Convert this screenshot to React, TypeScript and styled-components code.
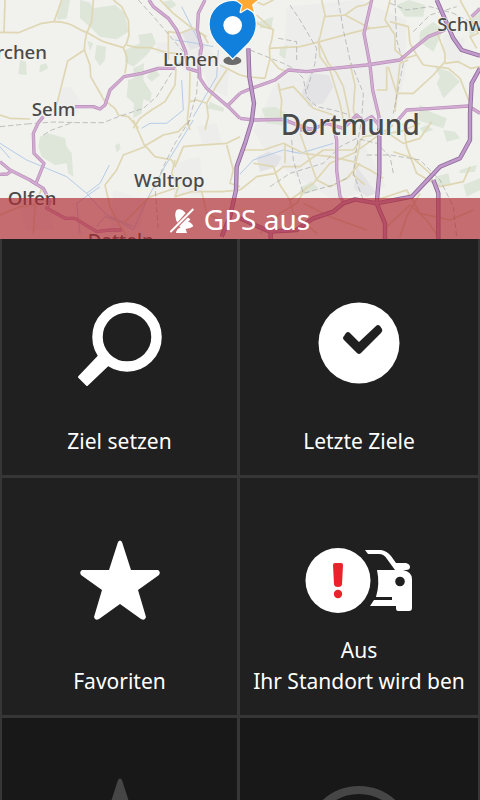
import React from "react";
import styled, { createGlobalStyle } from "styled-components";

const GlobalStyle = createGlobalStyle`
  *, *::before, *::after { box-sizing: border-box; }
  body { margin: 0; background: #363636; }
`;

const Screen = styled.main`
  display: flex;
  flex-direction: column;
  height: 100vh;
  overflow: hidden;
  background: #363636;
  color: #f2f2f2;
  font-family: "Noto Sans", "Open Sans", sans-serif;
`;

const MapPanel = styled.section`
  position: relative;
  flex: none;
  height: 239px;
  overflow: hidden;
  background: #f1f1ed;
`;

const MapDrawing = styled.svg`
  display: block;
  width: 100%;
  height: 100%;
`;

const StatusBanner = styled.div`
  position: absolute;
  left: 0;
  right: 0;
  bottom: 0;
  display: flex;
  align-items: center;
  justify-content: center;
  gap: 8px;
  height: 41px;
  background: rgba(175, 44, 53, 0.68);
  color: #fff;
  font-size: 28px;
  line-height: 40px;
`;

const StatusIcon = styled.svg`
  width: 26px;
  height: 26px;
  margin-top: 4px;
`;

const TileGrid = styled.nav`
  flex: 1;
  min-height: 0;
  display: grid;
  grid-template-columns: 235fr 238fr;
  grid-template-rows: 236px 237px 237px;
  gap: 3px;
  padding: 0 2px;
`;

const Tile = styled.button<{ $dimmed?: boolean }>`
  display: flex;
  flex-direction: column;
  align-items: center;
  justify-content: space-between;
  min-width: 0;
  padding: ${(p) => (p.$dimmed ? "58px" : "60px")} 11px 18px;
  border: 0;
  background: ${(p) => (p.$dimmed ? "#181818" : "#202020")};
  color: ${(p) => (p.$dimmed ? "#464646" : "#fff")};
  font: inherit;
  font-size: 21px;
  line-height: 31px;
`;

const TileIcon = styled.svg<{ $wide?: boolean }>`
  flex: none;
  width: ${(p) => (p.$wide ? "108px" : "84px")};
  height: 84px;
  overflow: visible;
`;

const Caption = styled.span`
  display: block;
  width: 100%;
  overflow: hidden;
  white-space: nowrap;
  text-align: center;
`;

const WOODS = [
  "M185 0L210 0L200 55L172 60L170 40Z",
  "M240 0L270 8L280 25L345 15L375 40L385 95L350 118L300 110L275 85L240 55Z",
  "M290 135L318 140L315 180L300 198L284 175Z",
  "M262 122L280 130L270 152Z",
  "M60 180L78 185L80 225L55 222Z",
  "M120 195L138 190L145 205L118 218Z",
  "M375 150L420 130L415 105L455 98L468 130L440 165L400 200L375 185Z",
  "M400 205L432 190L430 240L455 280L450 305L430 298L425 340L400 355L402 310L380 290L385 240L402 235Z",
  "M462 205L480 225L455 245L440 230Z",
  "M490 5L515 0L530 15L505 30Z",
  "M630 305L672 325L670 335L622 325Z",
  "M780 65L820 50L815 80L780 85Z",
  "M725 75L755 60L780 65L770 80L735 100Z",
  "M840 145L862 135L855 178L838 165Z",
  "M1190 15L1225 0L1275 15L1270 50L1215 50Z",
  "M1260 95L1300 65L1330 90L1300 155L1258 125Z",
  "M1305 200L1350 215L1380 245L1330 295L1310 250L1320 230Z",
  "M1405 60L1440 30L1440 85L1410 110Z",
  "M785 325L825 320L870 345L860 378L800 370Z",
  "M1260 315L1290 335L1340 355L1330 385L1250 360Z",
  "M120 410L145 400L195 415L200 440L215 460L220 530L205 520L200 490L165 495L125 470L115 440Z",
  "M345 435L358 430L362 445L350 458Z",
  "M905 560L935 545L955 565L925 580L895 585Z",
  "M1330 390L1365 395L1380 415L1340 425Z",
  "M1380 510L1430 495L1425 515L1378 520Z",
  "M1305 530L1345 520L1352 555L1310 560Z",
  "M1390 555L1440 535L1440 570L1400 590Z",
  "M1260 385L1280 375L1300 390L1270 400Z",
];

const TOWNS = [
  "M180 265L210 260L240 300L235 340L175 345Z",
  "M510 110L580 80L615 130L650 170L640 220L560 215L500 170Z",
  "M610 210L690 200L680 290L625 260Z",
  "M470 130L505 125L510 165L470 160Z",
  "M860 20L1080 0L1220 60L1215 220L1180 360L1090 430L1160 560L1000 600L810 480L760 390L850 200Z",
  "M520 490L600 470L610 590L520 580Z",
  "M590 380L650 370L665 430L610 435Z",
  "M1330 100L1395 115L1380 195L1330 170Z",
  "M340 570L440 600L420 690L330 680Z",
  "M60 620L150 600L160 690L80 690Z",
];

const INDUSTRY = [
  "M930 220L985 225L1000 260L970 310L925 320L905 280Z",
  "M770 470L805 455L845 470L830 500L780 515Z",
  "M1070 500L1130 580L1100 590L1062 565Z",
  "M545 95L580 80L600 140L570 150Z",
];

const LANES = [
  "M185 0L162 65L125 70L55 98L0 97M15 0L12 95",
  "M162 65C220 65 230 90 262 98L310 125L370 143L380 130L387 105L385 60L365 20L340 0",
  "M280 0L275 65L260 100L255 125L253 150L203 183L180 275L170 315",
  "M253 150L270 195L272 230L295 270L312 300L345 325L355 345L385 350L415 385",
  "M370 143L382 175L375 220",
  "M380 135L410 143L450 143L475 150L500 158L530 160",
  "M0 345L30 355L90 357",
  "M505 180L505 95L540 100L580 85L620 110",
  "M528 205L525 255L495 305L455 330L420 355L400 385",
  "M570 215L568 300L562 360L570 390M570 305L590 300L620 310M680 210L650 255L620 310L625 350L615 390",
  "M480 0L520 40L570 80L610 105L625 130M660 195L720 225",
  "M760 0L790 15L820 0M770 45L820 90L815 120L808 145L810 175L795 235M745 55L790 80L820 88",
  "M795 235L740 230L720 225M810 175L835 205L860 215M808 145L900 140L960 125L1050 100L1110 85L1170 78",
  "M965 0L975 45L960 110L955 125L985 190L1010 220L1030 260L1045 330L1050 365",
  "M955 125L960 170L990 210L1020 310L1030 360M1050 190L1065 255L1060 330L1070 360",
  "M975 50L1035 45L1110 85M1035 45L1070 20L1095 15L1120 0",
  "M1170 0L1155 60L1185 105L1185 150L1215 175L1250 165L1270 195",
  "M1200 190L1190 280L1240 280L1300 225L1335 185L1335 160L1310 95M1200 190L1225 180",
  "M1270 195L1345 205L1380 235L1410 310M1250 165L1230 130L1225 80L1170 65",
  "M1335 190L1375 185L1412 205L1440 200M1380 0L1435 100L1410 110L1430 145",
  "M1165 200L1190 280L1185 335M1130 270L1160 270L1160 200",
  "M835 250L840 270L880 260L940 325L1000 345M835 255L845 300L842 350L860 385",
  "M400 360L435 440L370 465L350 510L315 555L330 620L350 660L380 710",
  "M435 437L490 405L535 395L570 360M435 437L465 470L515 480L525 500L550 440L580 437L680 430L720 410",
  "M525 480L515 520L535 560L525 590L575 575L665 575L720 570M680 435L700 510L690 550L720 560",
  "M605 575L620 640L660 660L670 710M525 565L450 590L420 620L370 670",
  "M0 645L60 620L100 615L125 570M125 565L105 620L100 700",
  "M720 570L770 530L825 520L850 500L900 500L970 450L1060 450L1090 410L1200 395L1260 370",
  "M720 450L790 450L850 430L910 460L990 470L1060 485L1110 510L1150 535",
  "M760 490L820 500L840 555L870 600L940 550L990 490L1060 460L1130 410L1180 375",
  "M855 430L855 490M900 400L925 470L950 540L990 560L1040 535L1080 490M1080 430L1060 525L1095 555",
  "M1210 370L1220 440L1250 520L1320 560L1390 545L1410 500",
  "M1180 455L1240 475L1290 520L1310 580M1150 390L1210 430L1260 415L1295 365",
  "M780 700L840 640L890 610L920 560M870 600L880 640L950 700M910 610L990 650L1100 690",
  "M1130 600L1220 570L1260 640L1350 660L1420 630M1150 690L1230 615L1280 660L1315 710M1260 580L1220 650L1200 710",
];

const TRUNKS = [
  "M447 0L460 20L505 55L530 90L557 155L563 205L595 215",
  "M615 0L595 40L592 90L605 140L597 190L600 235L620 265L690 325L720 355",
  "M525 205L475 205L425 220L372 230L330 270L315 315L300 327L280 320L225 320",
  "M685 315L720 280",
  "M130 350L115 368L100 400L102 460L132 490L108 550",
  "M0 485L30 510L90 540L108 552L130 565L150 605L140 625L195 655L225 655L290 695L330 690L365 690",
  "M0 523L22 522L38 510",
  "M720 280L755 265L825 240L865 210L920 215L1000 205L1100 195L1200 180L1235 150L1285 110L1335 90",
  "M1115 0L1092 100L1110 195L1118 270L1137 350L1137 385",
  "M1415 50L1440 25M720 355L760 360L850 358L880 370L950 395",
  "M1190 365L1220 330L1300 325L1405 318L1440 340",
  "M1000 380L1010 420L1010 510L1020 590L1030 605",
  "M900 390L945 385L980 370L1030 385L1070 345L1090 365L1115 350L1137 375",
];

const MOTORWAYS = [
  "M745 145L748 230L762 310L755 365L735 430L710 500L708 570L690 650L665 710",
  "M1310 0L1360 115L1385 150L1440 167M1440 205L1415 250L1410 340L1410 420L1380 475L1320 500L1235 590L1130 610L1065 598L1030 610L1000 635L940 655L890 690L810 695L720 655",
  "M1138 385L1138 520L1130 610L1155 670L1155 717",
  "M1300 540L1315 580L1315 717M812 695L812 717",
];

const RAILS = [
  "M80 372L160 366L240 368L310 368L355 350L430 325L470 290L520 210L555 170M415 0L465 55L520 120L550 155M600 100L590 280L560 385",
  "M870 15L900 60L950 145L945 190L930 240L920 270M750 150L850 190L880 205L910 235L920 290L950 320L1000 330L1050 345",
  "M1015 0L1030 90L1050 180L1090 280L1085 360L1070 440L1060 520L1090 600",
  "M1185 0L1190 120L1210 190L1180 340M1170 10L1220 30L1290 20L1360 40L1440 80M1240 95L1290 45L1370 20",
  "M810 560L870 520L970 490L1020 440L1070 415L1130 430L1170 470L1180 520M875 420L880 480L910 580L1000 555L1050 530",
  "M1100 465L1170 465L1260 480L1320 540L1360 620L1370 710M835 115L890 125L890 180",
  "M570 360L525 430L490 500L465 560L475 690M0 380L80 372M130 405L155 390L220 367",
];

const WATER = [
  "M0 430L80 480L200 530L260 580L320 645L400 680M260 580L300 550L328 495",
  "M0 440L30 475M720 522L760 480L850 450L900 460L1000 430",
  "M425 385L450 370L500 370L550 330L545 240M580 360L500 490L440 600L400 690M655 150L650 230L580 350",
  "M525 120L590 130L640 140M545 20L600 130M300 560L230 610L240 700M400 690L360 665L315 650L290 680",
];

type PlaceLabel = { text: string; x: number; y: number; size: number; end?: boolean };

const PLACES: PlaceLabel[] = [
  { text: "rchen", x: 141, y: 178, size: 56, end: true },
  { text: "Selm", x: 95, y: 348, size: 56 },
  { text: "Lünen", x: 489, y: 199, size: 56 },
  { text: "Schw", x: 1312, y: 93, size: 56 },
  { text: "Dortmund", x: 842, y: 406, size: 84 },
  { text: "Waltrop", x: 402, y: 560, size: 56 },
  { text: "Olfen", x: 23, y: 614, size: 56 },
  { text: "Datteln", x: 263, y: 740, size: 56 },
];

const STAR =
  "M40 4Q42 1 44 4L53 32L80 32Q83 34 81 37L60 52L68 79Q67 83 63 81L42 66L21 81Q17 83 16 79L24 52L3 37Q1 34 4 32L31 32Z";

function CityMap() {
  return (
    <MapDrawing
      viewBox="0 0 1440 717"
      preserveAspectRatio="xMidYMid slice"
      role="img"
      aria-label="Karte"
      fill="none"
      strokeLinejoin="round"
    >
      <rect width="1440" height="717" fill="#f1f1ed" />
      {TOWNS.map((d) => <path key={d} d={d} fill="#ededeb" />)}
      {INDUSTRY.map((d) => <path key={d} d={d} fill="#e3e3e5" />)}
      {WOODS.map((d) => <path key={d} d={d} fill="#dde6d9" />)}
      {WATER.map((d) => <path key={d} d={d} stroke="#b4cce8" strokeWidth="3" />)}
      {LANES.map((d) => <path key={d} d={d} stroke="#dfd7b3" strokeWidth="5" />)}
      {RAILS.map((d) => (
        <path key={d} d={d} stroke="#a3a5a6" strokeWidth="2" strokeDasharray="16 8" />
      ))}
      {TRUNKS.map((d) => <path key={d} d={d} stroke="#b88fb8" strokeWidth="10" />)}
      {TRUNKS.map((d) => <path key={d} d={d} stroke="#d3acd3" strokeWidth="6" />)}
      {MOTORWAYS.map((d) => <path key={d} d={d} stroke="#8e699b" strokeWidth="13" />)}
      {MOTORWAYS.map((d) => <path key={d} d={d} stroke="#c09acb" strokeWidth="8" />)}
      <g
        fill="#4a4a4a"
        fontWeight="500"
        stroke="#f3f3ef"
        strokeWidth="4"
        paintOrder="stroke"
        fontFamily="Noto Sans, Open Sans, sans-serif"
      >
        {PLACES.map((p) => (
          <text key={p.text} x={p.x} y={p.y} fontSize={p.size} textAnchor={p.end ? "end" : "start"}>
            {p.text}
          </text>
        ))}
      </g>
      <ellipse cx="697" cy="182" rx="27" ry="13" fill="#6c6c6c" />
      <path
        d="M698 178L650 130Q627 103 627 72A71 71 0 0 1 769 72Q769 103 746 130Z"
        fill="#1180dc"
        stroke="#f8f8f5"
        strokeWidth="4"
      />
      <circle cx="698" cy="76" r="28" fill="#fff" />
      <path
        d="M742 -22L750 -2L774 0L756 14L762 36L742 24L722 36L728 14L710 0L734 -2Z"
        fill="#ffa834"
        stroke="#fff"
        strokeWidth="7"
        paintOrder="stroke"
      />
    </MapDrawing>
  );
}

function NoSignalIcon() {
  return (
    <StatusIcon viewBox="0 0 78 78" aria-hidden="true">
      <path
        d="M18 8Q26 0 38 7L47 15L22 44Q12 24 18 8ZM46 27Q60 29 61 36L54 40Q68 47 70 55Q54 68 32 58Q27 55 25 50ZM32 58L46 60L51 75L18 75Q19 63 32 58Z"
        fill="currentColor"
      />
      <path d="M4 70L70 4" stroke="#c46b6f" strokeWidth="11" />
      <path d="M1 72L70 3" stroke="currentColor" strokeWidth="6" />
    </StatusIcon>
  );
}

function SearchIcon() {
  return (
    <TileIcon viewBox="0 0 84 84" aria-hidden="true" fill="none" stroke="currentColor">
      <circle cx="49" cy="38" r="29.5" strokeWidth="10.5" />
      <path
        d="M21 57L30 66L9 86L1 78Z"
        fill="currentColor"
        strokeWidth="2"
        strokeLinejoin="round"
      />
      <path d="M20 58L27 51L36 60L29 67Z" fill="currentColor" stroke="none" />
    </TileIcon>
  );
}

function CheckIcon() {
  return (
    <TileIcon viewBox="0 0 84 84" aria-hidden="true">
      <circle cx="42" cy="44" r="40.5" fill="currentColor" />
      <path
        d="M29 34Q31 32 33 34L42 43L59 27Q61 25 63 27L65 30Q66 32 64 34L44 54Q42 56 40 54L27 41Q25 39 27 37Z"
        fill="#202020"
      />
    </TileIcon>
  );
}

function StarIcon() {
  return (
    <TileIcon viewBox="0 0 84 84" aria-hidden="true">
      <path d={STAR} fill="currentColor" />
    </TileIcon>
  );
}

function CarAlertIcon() {
  return (
    <TileIcon $wide viewBox="0 0 108 84" aria-hidden="true">
      <circle cx="33" cy="42.5" r="32.5" fill="currentColor" />
      <path
        d="M28 27Q28 25 30 25L36 25Q38 25 38 27L37 46Q37 49 33 49Q29 49 29 46Z"
        fill="#e9222b"
      />
      <circle cx="33" cy="56" r="4.2" fill="#e9222b" />
      <path
        d="M60 12L76 12Q82 13 86 18L91 25L101 25Q105 26 105 29Q105 32 101 32L98 32Q107 34 107 41L107 70Q107 73 104 73L93 73Q91 73 91 70L91 68L65 68L69 62L87 62L87 59L71 59Q75 46 72 32L90 32L82 21Q79 16 74 16L63 16Z"
        fill="currentColor"
      />
      <path d="M72 60.5L85 60.5" stroke="#202020" strokeWidth="3" strokeLinecap="round" />
      <circle cx="95" cy="43.5" r="4.8" fill="#202020" />
    </TileIcon>
  );
}

function RingIcon() {
  return (
    <TileIcon viewBox="0 0 84 84" aria-hidden="true" fill="none" stroke="currentColor">
      <circle cx="42" cy="64" r="50" strokeWidth="8" />
    </TileIcon>
  );
}

export default function App() {
  return (
    <Screen>
      <GlobalStyle />
      <MapPanel>
        <CityMap />
        <StatusBanner role="status">
          <NoSignalIcon />
          <span>GPS aus</span>
        </StatusBanner>
      </MapPanel>
      <TileGrid>
        <Tile type="button">
          <SearchIcon />
          <Caption>Ziel setzen</Caption>
        </Tile>
        <Tile type="button">
          <CheckIcon />
          <Caption>Letzte Ziele</Caption>
        </Tile>
        <Tile type="button">
          <StarIcon />
          <Caption>Favoriten</Caption>
        </Tile>
        <Tile type="button">
          <CarAlertIcon />
          <Caption>
            Aus
            <br />
            Ihr Standort wird ben
          </Caption>
        </Tile>
        <Tile type="button" $dimmed aria-label="Favorit">
          <StarIcon />
        </Tile>
        <Tile type="button" $dimmed aria-label="Weitere">
          <RingIcon />
        </Tile>
      </TileGrid>
    </Screen>
  );
}
